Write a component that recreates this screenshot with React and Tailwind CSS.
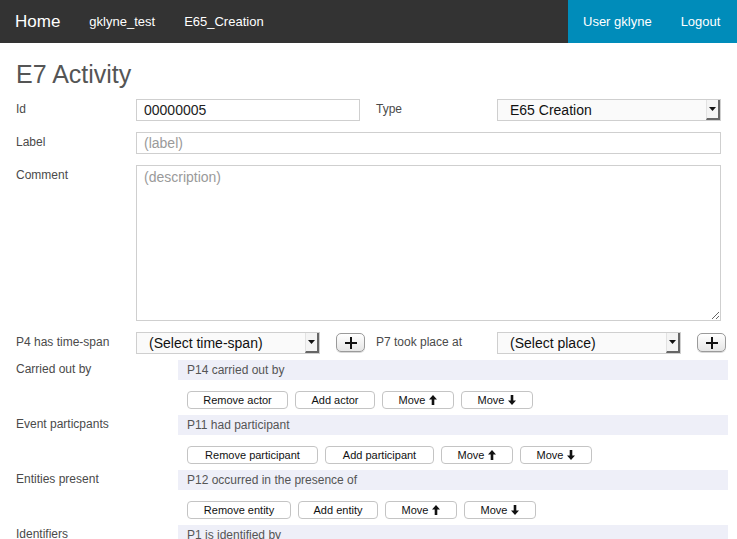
import React from 'react';

const font = { fontFamily: '"Liberation Sans", Arial, sans-serif' };

const ArrowUp = () => (
  <svg width="8" height="10" viewBox="0 0 8 10" className="inline-block ml-1">
    <path d="M4 0 L8 4.5 L5.3 4.5 L5.3 10 L2.7 10 L2.7 4.5 L0 4.5 Z" fill="#111" />
  </svg>
);

const ArrowDown = () => (
  <svg width="8" height="10" viewBox="0 0 8 10" className="inline-block ml-1">
    <path d="M4 10 L8 5.5 L5.3 5.5 L5.3 0 L2.7 0 L2.7 5.5 L0 5.5 Z" fill="#111" />
  </svg>
);

const Select = ({ value, className, textClass = 'pl-3' }) => (
  <div className={`flex items-stretch h-[22px] border border-[#cfcfcf] bg-[#fafafa] ${className}`}>
    <div className={`flex-1 flex items-center text-[14px] text-[#111] ${textClass}`}>{value}</div>
    <div className="w-[14px] flex items-center justify-center border-l border-[#e2e2e2] border-r-2 border-b-2 border-r-[#666] border-b-[#666] bg-[#f4f4f4]">
      <svg width="7" height="4" viewBox="0 0 7 4">
        <path d="M0 0 L7 0 L3.5 4 Z" fill="#111" />
      </svg>
    </div>
  </div>
);

const PlusButton = () => (
  <button className="w-[29px] h-[19px] rounded-[5px] border border-[#9a9a9a] bg-gradient-to-b from-white to-[#e6e6e6] flex items-center justify-center shadow-[0_1px_0_rgba(0,0,0,0.15)]">
    <svg width="12" height="12" viewBox="0 0 12 12">
      <path d="M6 0 V12 M0 6 H12" stroke="#111" strokeWidth="2" />
    </svg>
  </button>
);

const SmallButton = ({ children, w }) => (
  <button className={`${w} h-[18px] rounded-[4px] border border-[#c4c4c4] bg-white text-[11px] text-[#111] flex items-center justify-center`}>
    {children}
  </button>
);

const RepeatSection = ({ label, heading, buttons }) => (
  <div className="flex">
    <div className="w-[178px] pl-4 text-[12px] text-[#4a4a4a]">{label}</div>
    <div className="w-[550px]">
      <div className="h-[20px] bg-[#eeeff8] pl-[9px] flex items-center text-[12px] text-[#555]">{heading}</div>
      <div className="flex gap-[7px] pl-[9px] pt-[11px] pb-[6px]">
        <SmallButton w={buttons[0].w}>{buttons[0].t}</SmallButton>
        <SmallButton w={buttons[1].w}>{buttons[1].t}</SmallButton>
        <SmallButton w={buttons[2].w}>Move<ArrowUp /></SmallButton>
        <SmallButton w={buttons[3].w}>Move<ArrowDown /></SmallButton>
      </div>
    </div>
  </div>
);

export default function App() {
  return (
    <div style={font} className="w-[737px] h-[539px] overflow-hidden bg-white">
      {/* Navbar */}
      <div className="h-[43px] bg-[#333333] flex items-center">
        <div className="flex items-center flex-1 h-full">
          <span className="ml-[15px] text-[17px] text-white">Home</span>
          <span className="ml-[29px] text-[13px] text-white">gklyne_test</span>
          <span className="ml-[29px] text-[13px] text-white">E65_Creation</span>
        </div>
        <div className="w-[169px] h-full bg-[#008cba] flex items-center text-[13px] text-white">
          <span className="ml-[15px]">User gklyne</span>
          <span className="ml-[29px]">Logout</span>
        </div>
      </div>

      {/* Title */}
      <h1 className="pl-4 pt-[16px] text-[25px] leading-[30px] text-[#555]">E7 Activity</h1>

      <div className="mt-[10px] flex flex-col">
        {/* Id / Type */}
        <div className="flex items-start h-[33px]">
          <div className="w-[136px] pl-4 pt-[1px] text-[12px] text-[#4a4a4a]">Id</div>
          <div className="w-[224px] h-[22px] border border-[#cfcfcf] flex items-center pl-[7px] text-[14px] text-[#222]">00000005</div>
          <div className="w-[137px] pl-4 pt-[1px] text-[12px] text-[#4a4a4a]">Type</div>
          <Select value="E65 Creation" className="w-[224px]" />
        </div>

        {/* Label */}
        <div className="flex items-start h-[33px]">
          <div className="w-[136px] pl-4 pt-[1px] text-[12px] text-[#4a4a4a]">Label</div>
          <div className="w-[585px] h-[22px] border border-[#cfcfcf] flex items-center pl-[7px] text-[14px] text-[#9a9a9a]">(label)</div>
        </div>

        {/* Comment */}
        <div className="flex items-start h-[167px]">
          <div className="w-[136px] pl-4 pt-[1px] text-[12px] text-[#4a4a4a]">Comment</div>
          <textarea
            placeholder="(description)"
            className="w-[585px] h-[156px] border border-[#cfcfcf] px-[7px] py-[1px] text-[14px] placeholder-[#9a9a9a] outline-none"
          />
        </div>

        {/* Time-span / place */}
        <div className="flex items-start h-[28px]">
          <div className="w-[136px] pl-4 pt-[1px] text-[12px] text-[#4a4a4a]">P4 has time-span</div>
          <Select value="(Select time-span)" className="w-[184px]" textClass="pl-[12px]" />
          <div className="ml-[16px] pt-[1px]"><PlusButton /></div>
          <div className="w-[132px] pl-[11px] pt-[1px] text-[12px] text-[#4a4a4a]">P7 took place at</div>
          <Select value="(Select place)" className="w-[184px]" textClass="pl-[12px]" />
          <div className="ml-[16px] pt-[1px]"><PlusButton /></div>
        </div>

        <RepeatSection
          label="Carried out by"
          heading="P14 carried out by"
          buttons={[
            { t: 'Remove actor', w: 'w-[101px]' },
            { t: 'Add actor', w: 'w-[80px]' },
            { w: 'w-[72px]' },
            { w: 'w-[72px]' },
          ]}
        />
        <RepeatSection
          label="Event particpants"
          heading="P11 had participant"
          buttons={[
            { t: 'Remove participant', w: 'w-[131px]' },
            { t: 'Add participant', w: 'w-[109px]' },
            { w: 'w-[72px]' },
            { w: 'w-[72px]' },
          ]}
        />
        <RepeatSection
          label="Entities present"
          heading="P12 occurred in the presence of"
          buttons={[
            { t: 'Remove entity', w: 'w-[104px]' },
            { t: 'Add entity', w: 'w-[80px]' },
            { w: 'w-[72px]' },
            { w: 'w-[72px]' },
          ]}
        />
        <RepeatSection
          label="Identifiers"
          heading="P1 is identified by"
          buttons={[
            { t: 'Remove identifier', w: 'w-[120px]' },
            { t: 'Add identifier', w: 'w-[100px]' },
            { w: 'w-[72px]' },
            { w: 'w-[72px]' },
          ]}
        />
      </div>
    </div>
  );
}
